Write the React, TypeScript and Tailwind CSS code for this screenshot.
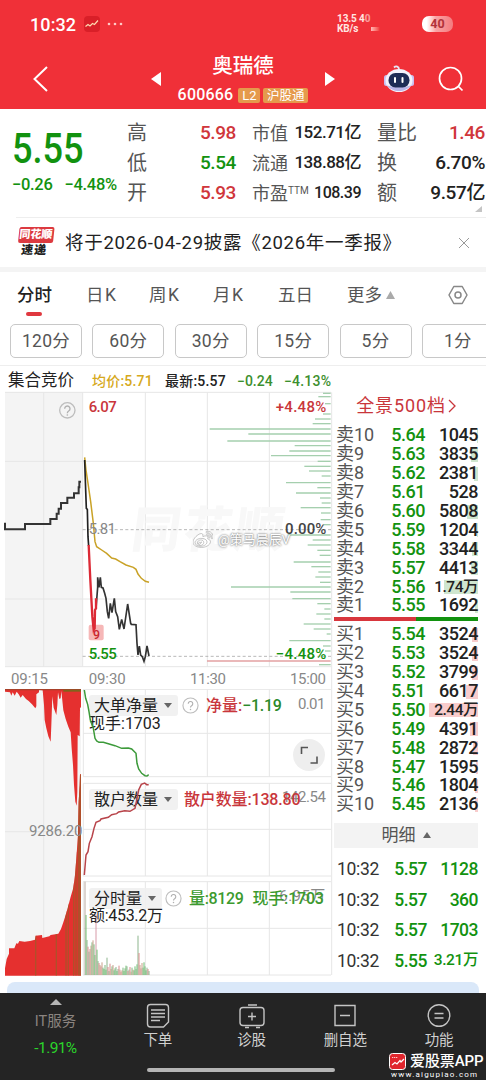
import type { ReactNode } from "react";
import { FaWeibo } from "react-icons/fa";
import clsx from "clsx";

type Level = { name: string; price: string; vol: string; bar: number };

const SELLS: Level[] = [
  { name: "卖10", price: "5.64", vol: "1045", bar: 1 },
  { name: "卖9", price: "5.63", vol: "3835", bar: 7 },
  { name: "卖8", price: "5.62", vol: "2381", bar: 4 },
  { name: "卖7", price: "5.61", vol: "528", bar: 0 },
  { name: "卖6", price: "5.60", vol: "5808", bar: 11 },
  { name: "卖5", price: "5.59", vol: "1204", bar: 1 },
  { name: "卖4", price: "5.58", vol: "3344", bar: 6 },
  { name: "卖3", price: "5.57", vol: "4413", bar: 7 },
  { name: "卖2", price: "5.56", vol: "1.74万", bar: 34 },
  { name: "卖1", price: "5.55", vol: "1692", bar: 3 },
];

const BUYS: Level[] = [
  { name: "买1", price: "5.54", vol: "3524", bar: 6 },
  { name: "买2", price: "5.53", vol: "3524", bar: 6 },
  { name: "买3", price: "5.52", vol: "3799", bar: 6 },
  { name: "买4", price: "5.51", vol: "6617", bar: 12 },
  { name: "买5", price: "5.50", vol: "2.44万", bar: 49 },
  { name: "买6", price: "5.49", vol: "4391", bar: 8 },
  { name: "买7", price: "5.48", vol: "2872", bar: 5 },
  { name: "买8", price: "5.47", vol: "1595", bar: 2 },
  { name: "买9", price: "5.46", vol: "1804", bar: 3 },
  { name: "买10", price: "5.45", vol: "2136", bar: 3 },
];

const TRADES = [
  { price: "5.57", vol: "1128" },
  { price: "5.57", vol: "360" },
  { price: "5.57", vol: "1703" },
  { price: "5.55", vol: "3.21万" },
];

const PERIODS = ["120分", "60分", "30分", "15分", "5分", "1分"];

// [length, y] of the depth bars on the right edge, chart units (3 per px)
const DEPTH = [
  [23, 10], [37, 20], [17, 41], [23, 72], [47, 87], [54, 101], [363, 117], [247, 132],
  [310, 153], [108, 167], [124, 183], [179, 197], [39, 214], [79, 229], [65, 243], [27, 258],
  [134, 278], [40, 293], [104, 309], [32, 324], [27, 339], [90, 353], [29, 369], [30, 389],
  [22, 404], [129, 435], [54, 450], [69, 465], [40, 481], [33, 496], [111, 516], [58, 530],
  [37, 546], [46, 561], [32, 577], [299, 591], [121, 606], [115, 626], [40, 641], [19, 657],
  [43, 672], [19, 687], [81, 702], [51, 717], [12, 732], [124, 752], [23, 768], [17, 783],
  [35, 824],
];

const VOLUMES = [
  280, 180, 105, 85, 70, 78, 88, 98, 104, 92, 60, 182, 76, 42, 36, 30, 26, 38, 22, 18, 30, 16,
  52, 24, 12, 34, 18, 26, 30, 14, 20, 24, 12, 18, 28, 16, 10, 14, 22, 12, 20, 28, 26, 12, 16, 24,
  10, 22, 16, 14, 26, 18, 32, 118, 66, 30, 20, 36, 22, 38, 26, 14, 22, 18, 12,
];
const VOL_COLORS = ["#7fb87f", "#d98c8c", "#6fbf73", "#c9a08a", "#8db58d"];

const HANGING =
  "15,12 15,20 30,22 34,32 38,22 44,32 50,20 56,28 62,38 68,30 78,42 86,48 96,58 106,70 109,64 109,28 117,22 117,14 128,16 132,60 134,105 139,130 145,154 152,170 154,120 157,34 161,68 169,90 172,60 174,22 178,42 182,40 184,18 190,76 197,102 205,125 212,142 215,190 219,240 222,300 226,350 230,362 232,320 233,150 239,154 240,70 243,66 243,12";
const RISING =
  "15,872 15,850 20,822 27,806 27,790 43,790 49,775 54,776 58,768 74,770 90,768 105,764 107,752 126,750 127,759 148,754 152,750 175,746 183,732 190,712 197,690 205,662 212,635 220,608 225,570 229,520 234,450 236,350 239,300 240,268 243,268 243,872";

function Question({ className }: { className?: string }) {
  return (
    <svg viewBox="0 0 18 18" className={clsx("size-[17px] shrink-0", className)}>
      <circle cx="9" cy="9" r="8" fill="none" stroke="#bdbdbd" strokeWidth="1.2" />
      <path d="M6.6 7.2a2.4 2.4 0 1 1 3.6 2.1c-.8.5-1.2.9-1.2 1.8" fill="none" stroke="#b0b0b0" strokeWidth="1.2" />
      <circle cx="9" cy="13.2" r=".8" fill="#b0b0b0" />
    </svg>
  );
}

function Triangle({ dir, className }: { dir: "up" | "down" | "left" | "right"; className: string }) {
  const d = { up: "M0 10 5 0 10 10Z", down: "M0 0H10L5 10Z", left: "M10 0V10L0 5Z", right: "M0 0 10 5 0 10Z" }[dir];
  return (
    <svg viewBox="0 0 10 10" preserveAspectRatio="none" className={clsx("shrink-0 fill-current", className)}>
      <path d={d} />
    </svg>
  );
}

function Header() {
  return (
    <header className="h-[109px] bg-[#f03038] text-white">
      <div className="flex h-12 items-center pl-[30px] pr-[33px]">
        <span className="text-[18px] font-medium tracking-[0.1px]">10:32</span>
        <svg viewBox="0 0 16 16" className="ml-2 size-4">
          <rect width="16" height="16" rx="4" fill="#d91f28" />
          <path d="M1.500 10.500 4 8.500l2 1.500 2.500-2.500 2 1 3.500-4" fill="none" stroke="#ffd9b0" strokeWidth="1.200" />
        </svg>
        <svg viewBox="0 0 16 4" className="ml-[7px] h-1 w-4 fill-[#ffc9c5]">
          <circle cx="2" cy="2" r="1.300" />
          <circle cx="8" cy="2" r="1.300" />
          <circle cx="14" cy="2" r="1.300" />
        </svg>
        <div className="ml-auto flex w-[34px] flex-col text-[10px] font-bold leading-[10.500px] tracking-[-0.1px] text-[#ffe6e2]">
          <span className="whitespace-nowrap">13.5 4<span className="opacity-60">0</span></span>
          <span>KB/s</span>
        </div>
        <div className="mt-[9px] h-1 w-[22px] bg-linear-to-r from-[#ffb8b8] to-[#f03038] to-40%" />
        <div className="ml-[29px] flex h-4 w-[31px] items-center justify-center rounded-[7px] bg-linear-to-r from-white from-15% via-[#f9a3a4] via-45% to-[#f47a7e] text-[12.500px] font-bold text-[#b3323a]">
          40
        </div>
      </div>
      <div className="flex h-[61px] items-center pl-[33px]">
        <svg viewBox="0 0 15 26" className="h-[26px] w-[15px] fill-none stroke-white stroke-2">
          <path d="M14 1 1.500 13 14 25" />
        </svg>
        <Triangle dir="left" className="ml-[103px] h-[14px] w-[10px]" />
        <div className="flex w-[164px] flex-col items-center">
          <h1 className="mt-[4px] text-[20.500px] font-medium leading-[29px]">奥瑞德</h1>
          <div className="flex items-center gap-[3px] text-[13px] leading-[15px]">
            <span className="mr-[2px] text-[16px] font-medium tracking-[0.2px] leading-7">600666</span>
            <span className="w-[22px] rounded-[2px] bg-[#e59a4c] text-center">L2</span>
            <span className="w-[45px] rounded-[2px] bg-[#e59a4c] text-center text-[12.500px]">沪股通</span>
          </div>
        </div>
        <Triangle dir="right" className="h-[14px] w-[10px]" />
        <svg viewBox="0 0 30 28" className="ml-[49px] h-7 w-[30px]">
          <path d="M10 2.500c2-2 5-1 5 2" fill="none" stroke="#e8e6f5" strokeWidth="1.800" />
          <rect x="0" y="10" width="5" height="11" rx="2.500" fill="#c9bff0" />
          <rect x="25" y="10" width="5" height="11" rx="2.500" fill="#c9bff0" />
          <ellipse cx="15" cy="15.500" rx="13.500" ry="11.500" fill="#f3f2fb" />
          <path d="M3 20c5 8 19 8 24 0-4 3-20 3-24 0Z" fill="#b9b4e6" />
          <rect x="4.500" y="8" width="21" height="14.500" rx="7" fill="#1e2b55" />
          <rect x="10" y="12" width="2" height="6" rx="1" fill="#fff" />
          <rect x="17.500" y="12" width="2" height="6" rx="1" fill="#fff" />
        </svg>
        <svg viewBox="0 0 26 26" className="ml-6 size-[26px] fill-none stroke-white" strokeWidth="1.700">
          <circle cx="12.500" cy="12.500" r="11" />
          <path d="m20 20 4.500 4.500" />
        </svg>
      </div>
    </header>
  );
}

function Quote() {
  return (
    <section className="relative flex h-[108px] text-[#222]">
      <div className="w-[127px] pl-3 text-[#12920f]">
        <div className="mt-[18px] origin-left scale-x-[0.86] text-[42px] font-medium leading-[44px]">5.55</div>
        <div className="mt-[4px] flex gap-3 whitespace-nowrap text-[16.500px] font-medium leading-5 tracking-[-0.3px]">
          <span>−0.26</span>
          <span>−4.48%</span>
        </div>
      </div>
      <div className="mt-[9px] grid w-[109px] auto-rows-[30px] grid-cols-2 items-center text-[19px] font-medium">
        <span className="text-[20px] font-normal text-[#555]">高</span>
        <span className="text-right tracking-[-0.4px] text-[#d0363b]">5.98</span>
        <span className="text-[20px] font-normal text-[#555]">低</span>
        <span className="text-right tracking-[-0.4px] text-[#12920f]">5.54</span>
        <span className="text-[20px] font-normal text-[#555]">开</span>
        <span className="text-right tracking-[-0.4px] text-[#d0363b]">5.93</span>
      </div>
      <div className="ml-4 mt-[9px] grid w-[109px] auto-rows-[30px] items-center whitespace-nowrap text-[17px] font-medium tracking-[-0.5px]">
        <Pair label="市值">152.71亿</Pair>
        <Pair label="流通">138.88亿</Pair>
        <Pair label={<>市盈<sup className="top-[-6px] text-[10px] tracking-normal">TTM</sup></>}>
          <span className="text-[16px]">108.39</span>
        </Pair>
      </div>
      <div className="ml-4 mt-[9px] grid w-[108px] auto-rows-[30px] items-center whitespace-nowrap text-[19px] font-medium tracking-[-0.4px]">
        <Pair big label="量比"><span className="text-[#d0363b]">1.46</span></Pair>
        <Pair big label="换">6.70%</Pair>
        <Pair big label="额">9.57亿</Pair>
      </div>
      <svg viewBox="0 0 7 6" className="absolute bottom-[5px] right-[4px] h-[6px] w-[7px] fill-[#c4c4c4]">
        <path d="M7 0V6H0Z" />
      </svg>
    </section>
  );
}

function Pair({ label, big, children }: { label: ReactNode; big?: boolean; children: ReactNode }) {
  return (
    <div className="flex items-center justify-between">
      <span className={clsx("font-normal tracking-normal text-[#555]", big ? "text-[20px]" : "text-[18px]")}>{label}</span>
      <span>{children}</span>
    </div>
  );
}

function News() {
  return (
    <section className="flex h-[55px] items-start border-b-[5px] border-[#f4f4f4]">
      <div className="ml-4 flex h-full w-full items-center border-t border-[#eee] pr-[17px]">
        <div className="flex w-[38px] -skew-x-6 flex-col items-center text-[12px] font-black leading-[15px]">
          <span className="h-4 w-[35px] rounded-[2px] bg-[#dc3a40] text-center text-[11px] leading-4 text-white">同花顺</span>
          <span className="tracking-[1px] text-[#222]">速递</span>
        </div>
        <p className="ml-[11px] mt-[2px] whitespace-nowrap text-[18.500px] font-normal tracking-[0.700px] text-[#222]">
          将于2026-04-29披露《2026年一季报》
        </p>
        <svg viewBox="0 0 10 10" className="ml-auto size-[10px] stroke-[#999] stroke-1">
          <path d="m0 0 10 10M10 0 0 10" />
        </svg>
      </div>
    </section>
  );
}

function Tabs() {
  return (
    <nav className="h-[94px] overflow-hidden border-b border-[#eee] text-[#555]">
      <div className="flex h-[46px] items-center whitespace-nowrap pl-[17px] text-[17.500px]">
        <span className="w-[69px] font-medium text-[#222]">分时</span>
        <span className="w-[63px] tracking-[1.500px]">日K</span>
        <span className="w-[64px] tracking-[1.500px]">周K</span>
        <span className="w-[65px] tracking-[1.500px]">月K</span>
        <span className="w-[69px]">五日</span>
        <span>更多</span>
        <Triangle dir="up" className="ml-1 h-[8px] w-[9px] text-[#aaa]" />
        <svg viewBox="0 0 20 20" className="ml-[53px] size-5 fill-none stroke-[#888]" strokeWidth="1.500">
          <path d="M5.800 1.500h8.400L19 10l-4.800 8.500H5.800L1 10Z" strokeLinejoin="round" />
          <circle cx="10" cy="10" r="3" />
        </svg>
      </div>
      <div className="-mt-[6px] ml-[26px] h-[4px] w-[16px] rounded-full bg-[#e0383f]" />
      <div className="ml-[10px] mt-2 flex w-[500px] gap-[10.400px]">
        {PERIODS.map((p) => (
          <span
            key={p}
            className="flex h-[34px] w-[72px] shrink-0 items-center justify-center rounded-[5px] border border-[#c8c8c8] text-[17.500px] tracking-[0.300px]"
          >
            {p}
          </span>
        ))}
      </div>
    </nav>
  );
}

function PriceChart() {
  return (
    <svg viewBox="0 0 1002 897" className="block h-[299px] w-[334px]" fontSize="45" fontWeight="500">
      <rect x="15" y="6" width="233" height="824" fill="#f4f4f4" />
      <g stroke="#e6e6e6" strokeWidth="3">
        <path d="M15 7H993M15 214H993M15 627H993M15 830H993M131 7V830M248 7V830M436 7V830M622 7V830M808 7V830M995 7V897" />
      </g>
      <g fontSize="146" fontWeight="900" fill="#f8f8f8">
        <text x="390" y="470" textLength="455" transform="skewX(-8) translate(66 0)">同花顺</text>
      </g>
      <path d="M248 419H993M248 799H993" stroke="#aaa" strokeWidth="2.500" strokeDasharray="9 7" />
      <g stroke="#a5cfae" strokeWidth="4">
        {DEPTH.map(([len, y]) => (
          <line key={y} x1={992 - len} x2={992} y1={y} y2={y} />
        ))}
        <line x1="621" x2="992" y1="813" y2="813" stroke="#e3a0a2" />
      </g>
      <circle cx="202" cy="61" r="23" fill="none" stroke="#bdbdbd" strokeWidth="4" />
      <path d="M194 56a8 8 0 1 1 12 7c-3 2-4 3-4 7" fill="none" stroke="#b0b0b0" strokeWidth="4" />
      <circle cx="202" cy="75" r="2.500" fill="#b0b0b0" />
      <path
        d="M15 398V418H75V402H151V387H170V371H176V356H183V339H202V323H222V310H236V292H238V275H243"
        fill="none"
        stroke="#333"
        strokeWidth="6"
      />
      <rect x="266" y="704" width="45" height="47" rx="6" fill="#f6b7b7" />
      <polyline
        points="254,202 258,240 264,280 272,335 280,400 285,455 290,470 305,480 320,490 335,504 347,507 360,515 378,525 400,532 408,538 414,552 424,565 436,574 447,577"
        fill="none"
        stroke="#c9a227"
        strokeWidth="4.500"
      />
      <polyline
        points="254,210 257,300 259,355 262,358 264,440 266,468"
        fill="none"
        stroke="#222"
        strokeWidth="5"
      />
      <polyline
        points="288,655 293,592 293,562 297,592 301,562 304,592 309,594 314,610 318,625 322,665 326,685 331,640 336,668 343,625 347,665 353,680 358,718 365,688 372,717 383,642 392,700 394,703 408,704 411,760 414,795 418,768 422,795 427,800 432,814 436,800 441,768 447,798"
        fill="none"
        stroke="#333"
        strokeWidth="5"
      />
      <polyline points="266,465 271,570 277,680 281,720 284,715 285,660 288,655 288,625" fill="none" stroke="#dc2a36" strokeWidth="7" />
      <text x="279" y="748" fontSize="37" fill="#c9252d">9</text>
      <g fill="#c9363b">
        <text x="266" y="66" textLength="84">6.07</text>
        <text x="827" y="66" textLength="152">+4.48%</text>
      </g>
      <text x="266" y="431" textLength="82" fill="#888" fontWeight="400">5.81</text>
      <text x="855" y="431" textLength="124" fill="#444">0.00%</text>
      <g fill="#12920f">
        <text x="266" y="808" textLength="84">5.55</text>
        <text x="827" y="808" textLength="152">−4.48%</text>
      </g>
      <g fill="#888" fontSize="45" fontWeight="400">
        <text x="33" y="883" textLength="111">09:15</text>
        <text x="266" y="883" textLength="111">09:30</text>
        <text x="570" y="883" textLength="108">11:30</text>
        <text x="870" y="883" textLength="108">15:00</text>
      </g>
    </svg>
  );
}

function SubCharts() {
  return (
    <svg viewBox="0 12 1002 873" className="block h-[291px] w-[334px]" fontSize="42">
      <rect x="15" y="12" width="228" height="860" fill="#f4f4f4" />
      <path
        d="M249 13H993M249 145H993M249 275H993M249 295H993M249 433H993M249 573H993M249 590H993M249 730H993M249 870H993M15 440H243M131 12V870M250 13V275M250 295V573M250 590V870M436 13V275M436 295V573M436 590V870M622 13V275M622 295V573M622 590V870M808 13V275M808 295V573M808 590V870M995 12V870"
        stroke="#e6e6e6"
        strokeWidth="3"
      />
      <clipPath id="rising">
        <polygon points={RISING} />
      </clipPath>
      <polygon points={HANGING} fill="#e5302f" />
      <polygon points={RISING} fill="#e5302f" />
      <path d="M15 14H243" stroke="#a8402a" strokeWidth="4" />
      <path d="M190 17H243" stroke="#80641c" strokeWidth="6" />
      <g clipPath="url(#rising)" stroke="#b04f2a" strokeWidth="4">
        <path d="M107 700V872M169 700V872M198 600V872M205 600V872M221 500V872M228 500V872" />
        <path d="M238 260V872" strokeWidth="10" />
      </g>
      <text x="87" y="452" textLength="160" fontSize="45" fill="#888">9286.20</text>
      <g strokeWidth="3">
        {VOLUMES.map((h, i) => (
          <line
            key={i}
            x1={255 + i * 3}
            x2={255 + i * 3}
            y1={870}
            y2={870 - h}
            stroke={i === 0 ? "#b9a9a0" : i === 11 ? "#d79aa8" : VOL_COLORS[(i * 7 + (i >> 2)) % 5]}
          />
        ))}
      </g>
      <g fill="#888" fontSize="45">
        <text x="894" y="71" textLength="82">0.01</text>
        <text x="846" y="352" textLength="132">142.54</text>
        <text x="838" y="648" textLength="138">6.95万</text>
      </g>
    </svg>
  );
}

// indicator lines go over the legends
function IndicatorLines() {
  return (
    <svg viewBox="0 12 1002 873" className="absolute bottom-0 left-0 h-[291px] w-[334px] fill-none" strokeWidth="4.500">
      <polyline
        points="253,15 257,40 263,58 267,80 271,105 280,130 285,160 290,168 297,172 310,172 325,176 345,182 365,190 385,189 395,192 408,205 411,235 416,252 425,265 435,272 441,273 446,269"
        stroke="#3c9a3a"
      />
      <polyline
        points="253,570 258,510 264,500 268,475 276,455 282,430 288,412 300,407 303,402 325,397 335,389 350,386 356,381 374,377 390,379 405,370 411,340 416,315 424,298 434,294 440,299 446,299"
        stroke="#b8444a"
      />
    </svg>
  );
}

function LegendName({ children }: { children: string }) {
  return (
    <span className="flex h-[21px] items-center rounded-[3px] bg-[#f0f0f0]/90 pl-[5px] pr-[6px] text-[#222]">
      {children}
      <Triangle dir="down" className="ml-[6px] h-[5px] w-[8px] text-[#666]" />
    </span>
  );
}

function Charts() {
  return (
    <div className="relative w-[334px] shrink-0">
      <PriceChart />
      <SubCharts />
      <div className="absolute left-[193px] top-[140px] flex items-center gap-[5px] text-[13px] text-white [text-shadow:0_0_2px_#777,0_0_2px_#999]">
        <FaWeibo className="size-5 fill-white stroke-[#999] stroke-[14]" />
        @策马晨辰V
      </div>
      <div className="absolute left-[89px] top-[305px] flex items-center whitespace-nowrap text-[16px] leading-5 text-[#222]">
        <LegendName>大单净量</LegendName>
        <Question className="ml-[4px]" />
        <span className="ml-[7px] font-medium text-[#c9363b]">净量:</span>
        <span className="font-medium tracking-[-0.300px] text-[#2b8a2a]">−1.19</span>
      </div>
      <span className="absolute left-[89px] top-[324px] text-[16px] leading-5 text-[#222]">现手:1703</span>
      <svg viewBox="0 0 32 32" className="absolute left-[293px] top-[349px] size-8">
        <circle cx="16" cy="16" r="16" fill="#eee" />
        <path d="M8.500 15V8.500H15M17.500 24H24v-6.500" fill="none" stroke="#555" strokeWidth="1.600" />
      </svg>
      <div className="absolute left-[89px] top-[399px] flex items-center whitespace-nowrap text-[16px] leading-5 text-[#222]">
        <LegendName>散户数量</LegendName>
        <span className="ml-[6px] font-medium tracking-[-0.150px] text-[#c9363b]">散户数量:138.80</span>
      </div>
      <div className="absolute left-[89px] top-[498px] flex items-center whitespace-nowrap text-[16px] leading-5 text-[#222]">
        <LegendName>分时量</LegendName>
        <Question className="ml-[3px]" />
        <span className="ml-[7px] font-medium tracking-[-0.350px] text-[#3c9a2e]">量:8129</span>
        <span className="ml-[9px] font-medium tracking-[-0.200px] text-[#3c9a2e]">现手:1703</span>
      </div>
      <span className="absolute left-[89px] top-[516px] text-[16px] leading-5 tracking-[-0.300px] text-[#222]">额:453.2万</span>
      <IndicatorLines />
    </div>
  );
}

function BookRow({ level, side }: { level: Level; side: "sell" | "buy" }) {
  const wan = level.vol.endsWith("万");
  return (
    <div className="relative flex h-[18.900px] items-center text-[18px] font-medium leading-[18px]">
      <div
        className={clsx("absolute right-0 top-[3px] h-[14px]", side === "sell" ? "bg-[#cfe6cf]" : "bg-[#f8cccc]")}
        style={{ width: level.bar }}
      />
      <span className="w-[42px] font-normal text-[#555]">{level.name}</span>
      <span className="w-[47px] text-right tracking-[-0.5px] text-[#12920f]">{level.price}</span>
      <span className={clsx("relative flex-1 text-right text-[#222]", wan ? "text-[15.500px] tracking-[-0.5px]" : "tracking-[-0.5px]")}>
        {level.vol}
      </span>
    </div>
  );
}

function OrderBook() {
  return (
    <aside className="w-[144px] whitespace-nowrap">
      <div className="flex h-9 items-center justify-center text-[18px] text-[#c9363b]">
        <span className="-mt-[6px] tracking-[0.900px]">全景500档</span>
        <svg viewBox="0 0 8 14" className="-mt-1 ml-[2px] h-[14px] w-2 fill-none stroke-[#c9363b]" strokeWidth="1.300">
          <path d="m1 1 6 6-6 6" />
        </svg>
      </div>
      <div className="pl-[2px]">
        {SELLS.map((l) => (
          <BookRow key={l.name} level={l} side="sell" />
        ))}
      </div>
      <div className="mb-[4px] mt-[2px] flex h-[4px]">
        <div className="w-[82px] bg-[#d8363d]" />
        <div className="flex-1 bg-[#12920f]" />
      </div>
      <div className="pl-[2px]">
        {BUYS.map((l) => (
          <BookRow key={l.name} level={l} side="buy" />
        ))}
      </div>
      <div className="mt-[9px] flex h-[25px] items-center justify-center gap-[7px] bg-[#f3f3f3] text-[17px] text-[#555]">
        明细
        <Triangle dir="up" className="h-[6px] w-[8px] text-[#666]" />
      </div>
      <div className="mt-[6px] pl-[3px]">
        {TRADES.map((t, i) => (
          <div key={i} className="flex h-[30.600px] items-center text-[17.500px] font-medium text-[#12920f]">
            <span className="w-[41px] font-normal tracking-[-0.3px] text-[#333]">10:32</span>
            <span className="w-[49px] text-right tracking-[-0.5px]">{t.price}</span>
            <span className={clsx("flex-1 text-right", t.vol.endsWith("万") ? "text-[15.500px] tracking-[-0.4px]" : "tracking-[-0.5px]")}>
              {t.vol}
            </span>
          </div>
        ))}
      </div>
    </aside>
  );
}

function NavItem({ label, children }: { label: string; children: ReactNode }) {
  return (
    <div className="flex flex-1 flex-col items-center pt-[10px] text-[14.500px] leading-5 text-[#d0d0d0]">
      <svg viewBox="0 0 28 26" className="h-[26px] w-7 fill-none stroke-[#c4c4c4]" strokeWidth="1.400">
        {children}
      </svg>
      <span className="mt-[2px]">{label}</span>
    </div>
  );
}

function BottomBar() {
  return (
    <footer className="relative flex h-[87px] bg-[#242424]">
      <div className="flex w-[111px] flex-col items-center pt-[6px]">
        <Triangle dir="up" className="h-[6px] w-3 text-[#b5b5b5]" />
        <span className="mt-[7px] text-[14.500px] leading-5 text-[#8b8480]">IT服务</span>
        <span className="mt-[6px] text-[15.500px] leading-5 tracking-[-0.6px] text-[#2bd42b]">-1.91%</span>
      </div>
      <NavItem label="下单">
        <path d="M6.500 1.500h15a3 3 0 0 1 3 3V19l-5 5H6.500a3 3 0 0 1-3-3V4.500a3 3 0 0 1 3-3ZM7 7h14M7 10.500h14M7 14h14M7 17.500h9" />
      </NavItem>
      <NavItem label="诊股">
        <rect x="2" y="4.500" width="24" height="18" rx="3" />
        <path d="M10 2h9M14 9.500v8M10 13.500h8M7 24.500h4M18 24.500h4" />
      </NavItem>
      <NavItem label="删自选">
        <path d="M4 2.500h20v20H4ZM9 12.500h10" />
      </NavItem>
      <NavItem label="功能">
        <circle cx="14" cy="12.500" r="10.800" />
        <path d="M9.500 10.500h9M9.500 15h9" />
      </NavItem>
      <div className="absolute bottom-[8px] left-[147px] h-[4.500px] w-[188px] rounded-full bg-[#b5b5b5]" />
      <div className="absolute bottom-0 right-[2px] w-[95px] text-white">
        <div className="flex items-center gap-1 whitespace-nowrap text-[15px] font-medium leading-[18px]">
          <svg viewBox="0 0 17 17" className="size-[17px] shrink-0">
            <rect x=".5" y=".5" width="16" height="16" rx="3" fill="#e0262d" stroke="#fff" />
            <path d="m3 12 3-2.500 2 1.500 3-3.500 1 1.500L15 6" fill="none" stroke="#fff" strokeWidth="1.200" />
            <path d="M3 4.500h6" stroke="#ffc9c9" strokeDasharray="1.300 .7" />
          </svg>
          <span className="tracking-[-0.1px]">爱股票APP</span>
        </div>
        <div className="whitespace-nowrap pl-[2px] text-[8px] leading-[10px] tracking-[1.200px]">www.aigupiao.com</div>
      </div>
    </footer>
  );
}

export default function App() {
  return (
    <div className="flex h-[1080px] w-[486px] flex-col overflow-hidden bg-white font-['Roboto','Noto_Sans_CJK_SC',sans-serif]">
      <Header />
      <Quote />
      <News />
      <Tabs />
      <div className="flex h-6 items-center whitespace-nowrap pl-2 pt-[5px] text-[14px] font-medium leading-5">
        <span className="w-[84px] text-[16.500px] font-normal text-[#222]">集合竞价</span>
        <span className="w-[73px] tracking-[0.200px] text-[#d6a91c]">均价:5.71</span>
        <span className="w-[72px] tracking-[0.200px] text-[#222]">最新:5.57</span>
        <span className="w-[47px] text-[#3c8f2e]">−0.24</span>
        <span className="tracking-[0.200px] text-[#3c8f2e]">−4.13%</span>
      </div>
      <div className="flex h-[590px]">
        <Charts />
        <OrderBook />
      </div>
      <div className="mx-[7px] mt-auto h-[11px] shrink-0 rounded-t-[8px] bg-[#dae8f9]" />
      <BottomBar />
    </div>
  );
}
